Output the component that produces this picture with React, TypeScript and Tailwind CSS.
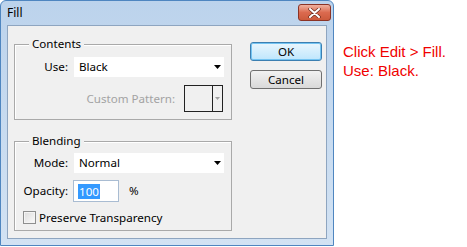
import React from 'react';

function Arrow({ color = '#000' }: { color?: string }) {
  return (
    <svg width="7" height="4" viewBox="0 0 7 4">
      <path d="M0 0h7L3.5 4z" fill={color} />
    </svg>
  );
}

function Select({ value }: { value: string }) {
  return (
    <div className="flex h-[20px] w-[150px] items-center justify-between bg-white pl-[5px] pr-[3px]">
      <span>{value}</span>
      <Arrow />
    </div>
  );
}

function Group({ title, className, children }: { title: string; className?: string; children: React.ReactNode }) {
  return (
    <div className={`relative w-[218px] border border-[#a9a9a9] shadow-[inset_1px_1px_0_#fff] ${className ?? ''}`}>
      <span className="absolute -top-[9px] left-[14px] bg-[#f0f0f0] px-[3px] leading-[16px]">{title}</span>
      {children}
    </div>
  );
}

function Button({ label, primary }: { label: string; primary?: boolean }) {
  return (
    <div
      className={`flex h-[19px] w-[72px] items-center justify-center rounded-[3px] border bg-linear-to-b ${
        primary
          ? 'border-[#3c7fb1] from-[#eaf6fd] to-[#bee6fd] shadow-[inset_0_0_0_1px_#74c4f2]'
          : 'border-[#707070] from-[#f2f2f2] to-[#d9d9d9]'
      }`}
    >
      {label}
    </div>
  );
}

export default function App() {
  return (
    <div className="flex h-[247px] w-[467px] bg-white font-['Noto_Sans',Roboto,sans-serif] text-[11.6px] text-black">
      {/* dialog window */}
      <div className="flex h-[246px] w-[334px] flex-col rounded-t-[6px] border border-[#4f86c0] bg-linear-to-b from-[#bcd3ec] to-[#d2e2f3]">
        <div className="flex h-[24px] shrink-0 items-start justify-between pl-[6px] pr-[2px]">
          <span className="mt-[4px] text-[12px] leading-[16px]">Fill</span>
          <div className="mt-[3px] flex h-[17px] w-[33px] items-center justify-center rounded-[3px] border border-[#8b3325] bg-linear-to-b from-[#eeb19f] via-[#db6a4f] to-[#cc5a3c]">
            <svg width="13" height="10" viewBox="0 0 13 10">
              <path d="M2 1l9 8M11 1l-9 8" stroke="#6b2a1c" strokeWidth="3.4" strokeLinecap="round" />
              <path d="M2 1l9 8M11 1l-9 8" stroke="#fff" strokeWidth="2" strokeLinecap="round" />
            </svg>
          </div>
        </div>
        <div className="mx-[6px] mb-[6px] flex flex-1 border border-[#8ea5c0] bg-[#f0f0f0] pl-[6px]">
          <div className="flex flex-col pt-[18px]">
            <Group title="Contents" className="h-[76px]">
              <div className="mt-[12px] flex items-center gap-[6px]">
                <span className="w-[53px] text-right">Use:</span>
                <Select value="Black" />
              </div>
              <div className="mt-[8px] flex items-center justify-end gap-[9px] pr-[8px]">
                <span className="text-[#a3a3a3]">Custom Pattern:</span>
                <div className="flex h-[27px] w-[39px] border border-[#222]">
                  <div className="flex-1" />
                  <div className="flex w-[10px] items-center justify-center border-l border-[#222]">
                    <svg width="5" height="3" viewBox="0 0 5 3">
                      <path d="M0 0h5L2.5 3z" fill="#a0a0a0" />
                    </svg>
                  </div>
                </div>
              </div>
            </Group>
            <Group title="Blending" className="mt-[21px] h-[90px]">
              <div className="mt-[11px] flex items-center gap-[6px]">
                <span className="w-[53px] text-right">Mode:</span>
                <Select value="Normal" />
              </div>
              <div className="mt-[7px] flex items-center gap-[5px]">
                <span className="w-[53px] text-right">Opacity:</span>
                <div className="flex h-[22px] w-[46px] items-center border border-[#a9bcd2] bg-white pl-[4px]">
                  <span className="bg-[#3399ff] px-[1px] leading-[15px] text-white">100</span>
                </div>
                <span className="ml-[5px]">%</span>
              </div>
              <div className="mt-[9px] flex items-center gap-[3px] pl-[8px]">
                <div className="h-[13px] w-[13px] border border-[#8e8f8f] bg-linear-to-br from-[#dcdcdc] to-[#fbfbfb] shadow-[inset_0_0_0_1px_#f4f4f4]" />
                <span className="leading-[13px]">Preserve Transparency</span>
              </div>
            </Group>
          </div>
          <div className="ml-[18px] flex flex-col gap-[9px] pt-[16px]">
            <Button label="OK" primary />
            <Button label="Cancel" />
          </div>
        </div>
      </div>
      {/* note */}
      <div className="ml-[9px] mt-[42px] font-['Liberation_Sans',Arial,sans-serif] text-[15px] leading-[19px] text-[#f00000]">
        <div>Click Edit &gt; Fill.</div>
        <div>Use: Black.</div>
      </div>
    </div>
  );
}
